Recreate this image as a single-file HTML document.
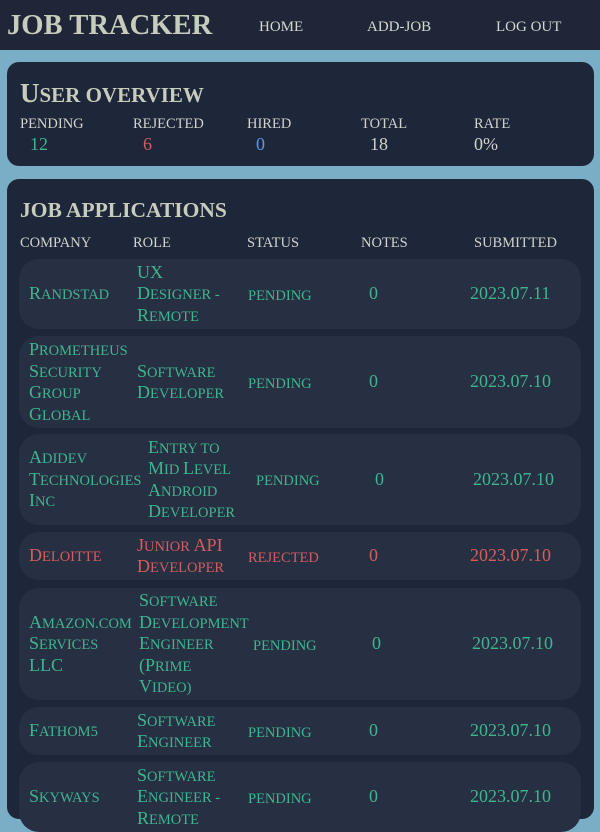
<!DOCTYPE html>
<html><head><style>
body{margin:0;width:600px;height:800px;overflow:hidden;background:#7aaec6;font-family:"Liberation Serif","Times New Roman",serif;position:relative}
.hdr{position:absolute;left:0;top:0;width:600px;height:50px;background:#1f2638}
.logo{position:absolute;left:7px;top:10px;font-size:28.6px;font-weight:bold;color:#c7cdbd}
.nav{position:absolute;top:19px;font-size:15px;color:#d4d8cf}
.card{position:absolute;left:7px;width:587px;background:#1e263a;border-radius:12px}
.h2{position:absolute;left:13px;font-weight:bold;color:#c7cdbd;text-transform:uppercase}
.lbl{position:absolute;font-size:14.5px;color:#d0d4cc}
.val{position:absolute;font-size:18px}
.row{position:absolute;left:19px;width:562px;background:#272f43;border-radius:20px}
.c{position:absolute;top:0;bottom:0;display:flex;align-items:center;font-size:14.5px;line-height:21.5px;text-transform:uppercase;color:#3fb58f;white-space:nowrap;box-sizing:border-box}
.c b{font-weight:normal;font-size:18px;line-height:12px}
.c span{padding-top:4px}
.s{padding-top:5px}
.red .c{color:#d45d5d}
.n{font-size:18px}
</style></head><body>
<div class="hdr">
<div class="logo">JOB TRACKER</div>
<div class="nav" style="left:259px">HOME</div>
<div class="nav" style="left:367px">ADD-JOB</div>
<div class="nav" style="left:496px">LOG OUT</div>
</div>
<div class="card" style="top:62px;height:104px">
<div class="h2" style="top:16px;font-size:21px"><span style="font-size:27px">U</span>SER OVERVIEW</div>
<div class="lbl" style="left:13px;top:54px">PENDING</div>
<div class="lbl" style="left:126px;top:54px">REJECTED</div>
<div class="lbl" style="left:240px;top:54px">HIRED</div>
<div class="lbl" style="left:354px;top:54px">TOTAL</div>
<div class="lbl" style="left:467px;top:54px">RATE</div>
<div class="val" style="left:23px;top:72px;color:#3fb58f">12</div>
<div class="val" style="left:136px;top:72px;color:#d45d5d">6</div>
<div class="val" style="left:249px;top:72px;color:#5b9ae0">0</div>
<div class="val" style="left:363px;top:72px;color:#d0d4cc">18</div>
<div class="val" style="left:467px;top:72px;color:#d0d4cc">0%</div>
</div>
<div class="card" style="top:179px;height:640px">
<div class="h2" style="top:19px;font-size:21.5px">JOB APPLICATIONS</div>
<div class="lbl" style="left:13px;top:56px">COMPANY</div>
<div class="lbl" style="left:126px;top:56px">ROLE</div>
<div class="lbl" style="left:240px;top:56px">STATUS</div>
<div class="lbl" style="left:354px;top:56px">NOTES</div>
<div class="lbl" style="left:467px;top:56px">SUBMITTED</div>
</div>

<div class="row" style="top:259px;height:70px">
<div class="c" style="left:10px"><span><b>R</b>andstad</span></div>
<div class="c" style="left:118px"><span><b>UX</b><br><b>D</b>esigner -<br><b>R</b>emote</span></div>
<div class="c s" style="left:229px">pending</div>
<div class="c n" style="left:350px">0</div>
<div class="c n" style="left:451px">2023.07.11</div>
</div>
<div class="row" style="top:336px;height:92px">
<div class="c" style="left:10px"><span><b>P</b>rometheus<br><b>S</b>ecurity<br><b>G</b>roup<br><b>G</b>lobal</span></div>
<div class="c" style="left:118px"><span><b>S</b>oftware<br><b>D</b>eveloper</span></div>
<div class="c s" style="left:229px">pending</div>
<div class="c n" style="left:350px">0</div>
<div class="c n" style="left:451px">2023.07.10</div>
</div>
<div class="row" style="top:434px;height:91px">
<div class="c" style="left:10px"><span><b>A</b>didev<br><b>T</b>echnologies<br><b>I</b>nc</span></div>
<div class="c" style="left:129px"><span><b>E</b>ntry to<br><b>M</b>id <b>L</b>evel<br><b>A</b>ndroid<br><b>D</b>eveloper</span></div>
<div class="c s" style="left:237px">pending</div>
<div class="c n" style="left:356px">0</div>
<div class="c n" style="left:454px">2023.07.10</div>
</div>
<div class="row red" style="top:532px;height:48px">
<div class="c" style="left:10px"><span><b>D</b>eloitte</span></div>
<div class="c" style="left:118px"><span><b>J</b>unior <b>API</b><br><b>D</b>eveloper</span></div>
<div class="c s" style="left:229px">rejected</div>
<div class="c n" style="left:350px">0</div>
<div class="c n" style="left:451px">2023.07.10</div>
</div>
<div class="row" style="top:588px;height:112px">
<div class="c" style="left:10px"><span><b>A</b>mazon.com<br><b>S</b>ervices<br><b>LLC</b></span></div>
<div class="c" style="left:120px"><span><b>S</b>oftware<br><b>D</b>evelopment<br><b>E</b>ngineer<br><b>(P</b>rime<br><b>V</b>ideo)</span></div>
<div class="c s" style="left:234px">pending</div>
<div class="c n" style="left:353px">0</div>
<div class="c n" style="left:453px">2023.07.10</div>
</div>
<div class="row" style="top:707px;height:48px">
<div class="c" style="left:10px"><span><b>F</b>athom5</span></div>
<div class="c" style="left:118px"><span><b>S</b>oftware<br><b>E</b>ngineer</span></div>
<div class="c s" style="left:229px">pending</div>
<div class="c n" style="left:350px">0</div>
<div class="c n" style="left:451px">2023.07.10</div>
</div>
<div class="row" style="top:762px;height:70px">
<div class="c" style="left:10px"><span><b>S</b>kyways</span></div>
<div class="c" style="left:118px"><span><b>S</b>oftware<br><b>E</b>ngineer -<br><b>R</b>emote</span></div>
<div class="c s" style="left:229px">pending</div>
<div class="c n" style="left:350px">0</div>
<div class="c n" style="left:451px">2023.07.10</div>
</div>
</body></html>
